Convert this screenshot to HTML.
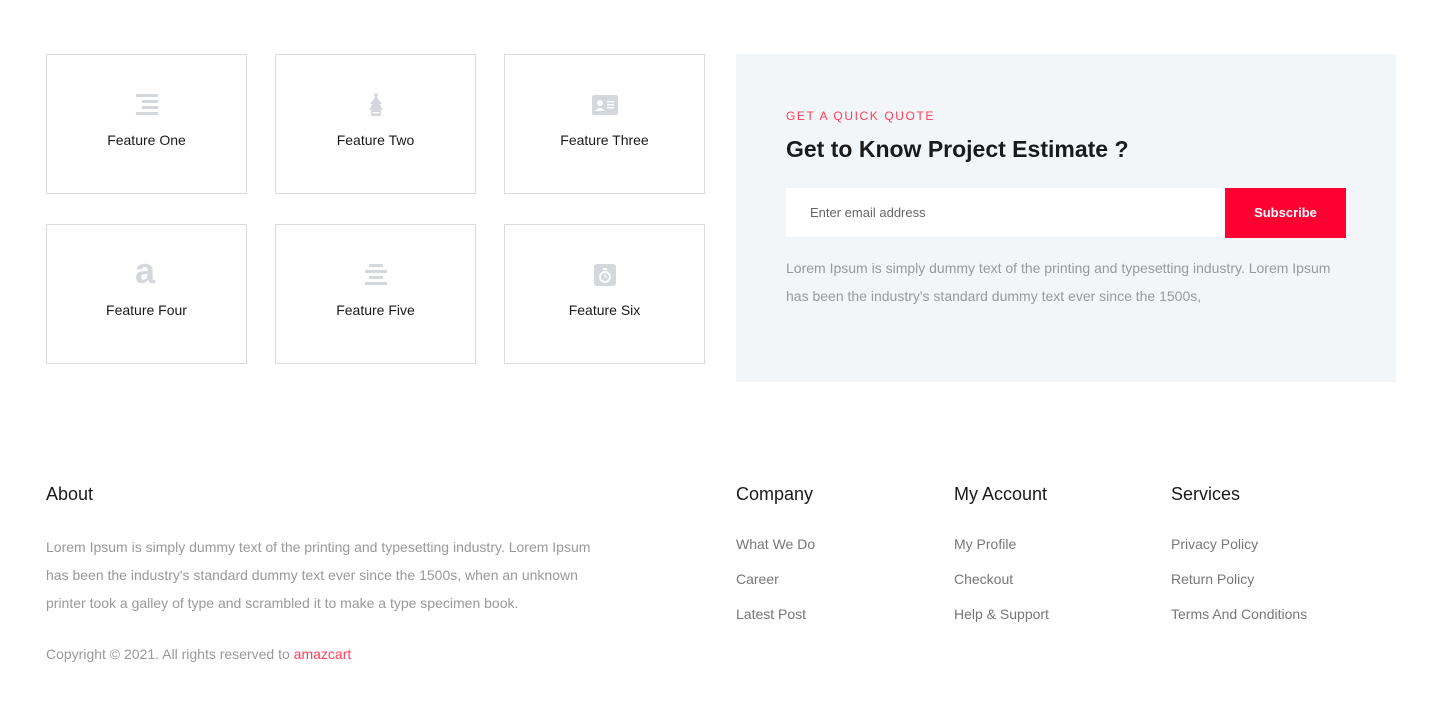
<!DOCTYPE html><html><head><style>
body{margin:0;width:1438px;height:727px;background:#fff;font-family:"Liberation Sans",sans-serif;position:relative;overflow:hidden}
.c{position:absolute;width:201px;height:140px;border:1px solid #d8dbe2;box-sizing:border-box;text-align:center}
.c svg{position:absolute;left:88px;top:38px}
.c span{position:absolute;left:0;right:0;top:77px;font-size:14px;color:#1a1a1a}
.a{position:absolute}
h4{position:absolute;margin:0;font-size:18px;font-weight:normal;color:#1a1a1a}
.l{position:absolute;font-size:14px;color:#777}
</style></head><body>
<div class="c" style="left:46px;top:54px"><svg width="24" height="24"><g fill="#d4d7dc"><rect x="1" y="1" width="22" height="3"/><rect x="7" y="7" width="16" height="3"/><rect x="7" y="13" width="16" height="3"/><rect x="1" y="19" width="22" height="3"/></g></svg><span>Feature One</span></div>
<div class="c" style="left:275px;top:54px"><svg width="24" height="24"><g fill="#d4d7dc"><circle cx="12" cy="2" r="1.8"/><path d="M12 3L6 11H8.5L5 17H19L15.5 11H18Z"/><rect x="7" y="17" width="10" height="6"/></g><rect x="8.5" y="19" width="7" height="1.3" fill="#fff"/></svg><span>Feature Two</span></div>
<div class="c" style="left:504px;top:54px"><svg width="28" height="24" style="left:86px"><rect x="1" y="2" width="26" height="20" rx="2" fill="#d4d7dc"/><circle cx="9" cy="10" r="3" fill="#fff"/><path d="M4 18q5-6 10 0z" fill="#fff"/><g fill="#fff"><rect x="16" y="8" width="7" height="1.5"/><rect x="16" y="11" width="7" height="1.5"/><rect x="16" y="14" width="7" height="1.5"/></g></svg><span>Feature Three</span></div>
<div class="c" style="left:46px;top:224px"><div class="a" style="left:88px;top:26px;font-size:36px;font-weight:bold;color:#d4d7dc;line-height:40px">a</div><span>Feature Four</span></div>
<div class="c" style="left:275px;top:224px"><svg width="24" height="24"><g fill="#d4d7dc"><rect x="5" y="1" width="14" height="3"/><rect x="1" y="7" width="22" height="3"/><rect x="5" y="13" width="14" height="3"/><rect x="1" y="19" width="22" height="3"/></g></svg><span>Feature Five</span></div>
<div class="c" style="left:504px;top:224px"><svg width="24" height="24"><rect x="1" y="1" width="22" height="22" rx="3" fill="#d4d7dc"/><circle cx="12" cy="14" r="5" fill="none" stroke="#fff" stroke-width="1.8"/><rect x="10" y="5" width="4" height="2" fill="#fff"/><path d="M12 11v3h2" stroke="#fff" fill="none"/></svg><span>Feature Six</span></div>

<div class="a" style="left:736px;top:54px;width:660px;height:328px;background:#f3f6f9">
<div class="a" style="left:50px;top:55px;font-size:12px;letter-spacing:1.6px;color:#ff3d5a">GET A QUICK QUOTE</div>
<div class="a" style="left:50px;top:82px;font-size:23px;font-weight:bold;color:#1a1a1a">Get to Know Project Estimate ?</div>
<div class="a" style="left:50px;top:134px;width:439px;height:49px;background:#fff"><span class="a" style="left:24px;top:17px;font-size:13px;color:#666">Enter email address</span></div>
<div class="a" style="left:489px;top:134px;width:121px;height:50px;background:#ff0033;color:#fff;font-size:13px;font-weight:bold;text-align:center;line-height:50px">Subscribe</div>
<div class="a" style="left:50px;top:200px;width:560px;font-size:14px;line-height:28px;color:#999">Lorem Ipsum is simply dummy text of the printing and typesetting industry. Lorem Ipsum<br>has been the industry's standard dummy text ever since the 1500s,</div>
</div>

<h4 style="left:46px;top:484px">About</h4>
<div class="a" style="left:46px;top:533px;width:600px;font-size:14px;line-height:28px;color:#999">Lorem Ipsum is simply dummy text of the printing and typesetting industry. Lorem Ipsum<br>has been the industry's standard dummy text ever since the 1500s, when an unknown<br>printer took a galley of type and scrambled it to make a type specimen book.</div>
<div class="a" style="left:46px;top:646px;font-size:14px;color:#999">Copyright © 2021. All rights reserved to <span style="color:#ff3d5a">amazcart</span></div>

<h4 style="left:736px;top:484px">Company</h4>
<div class="l" style="left:736px;top:536px">What We Do</div><div class="l" style="left:736px;top:571px">Career</div><div class="l" style="left:736px;top:606px">Latest Post</div>
<h4 style="left:954px;top:484px">My Account</h4>
<div class="l" style="left:954px;top:536px">My Profile</div><div class="l" style="left:954px;top:571px">Checkout</div><div class="l" style="left:954px;top:606px">Help &amp; Support</div>
<h4 style="left:1171px;top:484px">Services</h4>
<div class="l" style="left:1171px;top:536px">Privacy Policy</div><div class="l" style="left:1171px;top:571px">Return Policy</div><div class="l" style="left:1171px;top:606px">Terms And Conditions</div>
</body></html>
